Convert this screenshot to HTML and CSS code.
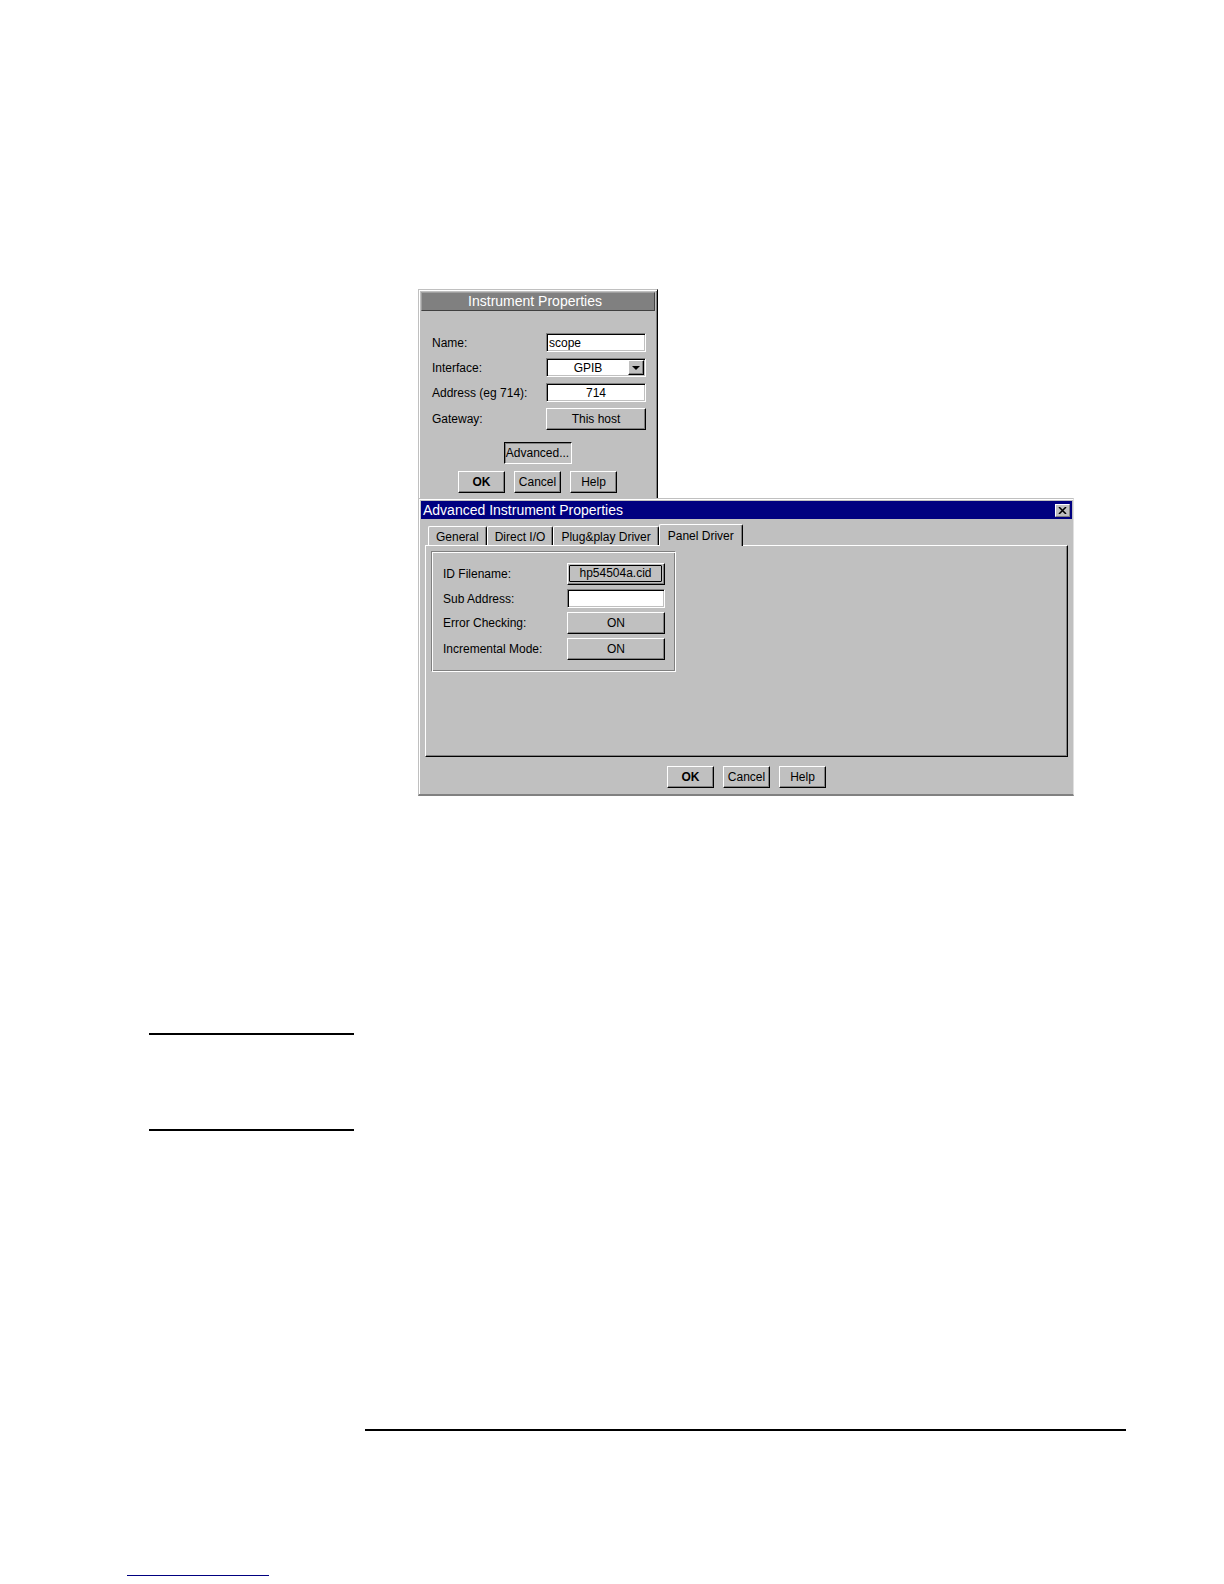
FILE: index.html
```
<!DOCTYPE html>
<html lang="en">
    <head>
        <meta charset="UTF-8" />
        <meta name="viewport" content="width=device-width, initial-scale=1.0" />
        <title>Advanced Instrument Properties</title>
        <link rel="stylesheet" href="styles.css">
    </head>
    <body>
        <main class="figure">
            <form class="dialog instrument">
                <h1 class="caption">Instrument Properties</h1>
                <div class="fields">
                    <label for="name">Name:</label>
                    <input id="name" type="text" value="scope" />

                    <label for="interface">Interface:</label>
                    <div class="dropdown">
                        <select id="interface">
                            <option>GPIB</option>
                        </select>
                        <span class="arrow">
                            <svg width="8" height="4" viewBox="0 0 8 4">
                                <path d="M0 0h8L4 4z" />
                            </svg>
                        </span>
                    </div>

                    <label for="address">Address (eg 714):</label>
                    <input id="address" class="centered" type="text" value="714" />

                    <label for="gateway">Gateway:</label>
                    <button id="gateway" type="button">This host</button>
                </div>
                <button class="advanced-button" type="button">Advanced...</button>
                <div class="actions">
                    <button class="default" type="button">OK</button>
                    <button type="button">Cancel</button>
                    <button type="button">Help</button>
                </div>
            </form>

            <form class="dialog advanced">
                <div class="titlebar">
                    <h2>Advanced Instrument Properties</h2>
                    <button class="close" type="button" aria-label="Close">
                        <svg width="9" height="7" viewBox="0 0 9 7">
                            <path d="M1 0l7 7M8 0L1 7" />
                        </svg>
                    </button>
                </div>
                <div class="tabs" role="tablist">
                    <button class="tab" type="button" role="tab">General</button>
                    <button class="tab" type="button" role="tab">Direct I/O</button>
                    <button class="tab" type="button" role="tab">Plug&amp;play Driver</button>
                    <button class="tab selected" type="button" role="tab" aria-selected="true">Panel Driver</button>
                </div>
                <div class="panel" role="tabpanel">
                    <div class="group">
                        <label for="idFilename">ID Filename:</label>
                        <button id="idFilename" class="focused" type="button">
                            <span>hp54504a.cid</span>
                        </button>

                        <label for="subAddress">Sub Address:</label>
                        <input id="subAddress" type="text" />

                        <label for="errorChecking">Error Checking:</label>
                        <button id="errorChecking" type="button">ON</button>

                        <label for="incrementalMode">Incremental Mode:</label>
                        <button id="incrementalMode" type="button">ON</button>
                    </div>
                </div>
                <div class="actions">
                    <button class="default" type="button">OK</button>
                    <button type="button">Cancel</button>
                    <button type="button">Help</button>
                </div>
            </form>
        </main>

        <aside class="note"></aside>
        <footer>
            <hr />
            <a class="footer-link" href="#" aria-label="Footer link"></a>
        </footer>
    </body>
</html>
```
FILE: styles.css
```
* {
    box-sizing: border-box;
}
body {
    margin: 0;
    background: white;
    color: black;
    font-family: "Liberation Sans", Arial, sans-serif;
    font-size: 12px;
}
h1,
h2 {
    margin: 0;
    font-weight: normal;
    color: white;
}
button,
input,
select {
    margin: 0;
    padding: 0;
    font: inherit;
    color: black;
    border-radius: 0;
}

/* Raised and sunken controls */
button {
    height: 22px;
    background: #c0c0c0;
    border: 1px solid;
    border-color: white black black white;
    box-shadow: inset -1px -1px #808080;
}
input,
select {
    width: 100%;
    height: 19px;
    background: white;
    border: 1px solid;
    border-color: #808080 white white #808080;
    box-shadow: inset 1px 1px black, inset -1px -1px #c0c0c0;
}
input {
    padding-left: 2px;
}
.centered {
    padding-left: 0;
    text-align: center;
}

.figure {
    margin: 289px 150px 0 418px;
}
.dialog {
    background: #c0c0c0;
}

/* Instrument Properties */
.instrument {
    display: flex;
    flex-direction: column;
    width: 240px;
    padding: 2px 2px 5px 1px;
    border: 1px solid #c0c0c0;
    border-right-color: black;
    border-bottom: none;
    box-shadow: inset 1px 1px white, inset -1px 0 #808080;
}
.caption {
    height: 19px;
    background: #808080;
    border: 1px solid;
    border-color: #a0a0a0 #404040 #404040 #a0a0a0;
    margin-left: 1px;
    padding-right: 6px;
    font-size: 14px;
    line-height: 17px;
    text-align: center;
}
.fields {
    display: grid;
    grid-template-columns: 114px 1fr;
    row-gap: 6px;
    align-items: center;
    padding: 22px 9px 12px 12px;
}
.dropdown {
    position: relative;
}
select {
    display: block;
    appearance: none;
    padding-right: 16px;
    text-align: center;
    text-align-last: center;
}
/* Sits over the right end of the select */
.arrow {
    position: absolute;
    top: 2px;
    right: 2px;
    bottom: 2px;
    display: flex;
    align-items: center;
    justify-content: center;
    width: 16px;
    background: #c0c0c0;
    border: 1px solid;
    border-color: white black black white;
    box-shadow: inset -1px -1px #808080;
    pointer-events: none;
}
.advanced-button {
    align-self: center;
    width: 68px;
    border-color: black white white black;
    box-shadow: inset 1px 1px #808080;
}
.actions {
    display: flex;
    justify-content: center;
    gap: 9px;
}
.actions button {
    width: 47px;
}
.instrument .actions {
    margin-top: 7px;
}
.default {
    font-weight: bold;
}

/* Advanced Instrument Properties */
.advanced {
    padding: 2px 1px 6px 2px;
    border: 1px solid #c0c0c0;
    border-right-color: #e0e0e0;
    border-bottom: 2px solid #808080;
    box-shadow: inset 1px 1px white;
}
.titlebar {
    display: flex;
    align-items: center;
    justify-content: space-between;
    height: 18px;
    padding: 0 2px;
    background: #000080;
}
.titlebar h2 {
    font-size: 14px;
    line-height: 18px;
}
.close {
    display: flex;
    align-items: center;
    justify-content: center;
    width: 15px;
    height: 13px;
    border-color: white #808080 #808080 white;
    box-shadow: none;
}
.close path {
    fill: none;
    stroke: black;
    stroke-width: 1.5;
}
.tabs {
    display: flex;
    align-items: flex-end;
    height: 26px;
    padding: 0 7px;
}
.tab {
    height: 19px;
    padding: 2px 7px 0;
    border-bottom: none;
    border-top-left-radius: 2px;
    border-top-right-radius: 2px;
    box-shadow: inset -1px 0 #808080;
}
/* The selected tab covers the top edge of the panel */
.tab.selected {
    position: relative;
    height: 22px;
    padding: 0 8px;
    margin-bottom: -1px;
}
.panel {
    height: 212px;
    margin: 0 4px 9px;
    padding: 5px;
    border: 1px solid;
    border-color: white black black white;
    box-shadow: inset -1px -1px #808080;
}
.group {
    display: grid;
    grid-template-columns: 124px 98px;
    row-gap: 4px;
    align-items: center;
    width: 245px;
    padding: 11px;
    border: 1px solid;
    border-color: #808080 white white #808080;
    box-shadow: inset 1px 1px white, inset -1px -1px #808080;
}
.focused {
    padding: 1px 2px 2px 1px;
}
.focused span {
    display: block;
    height: 17px;
    line-height: 15px;
    border: 1px solid black;
    border-radius: 1px;
}

/* Page rules */
.note {
    width: 205px;
    height: 98px;
    margin: 237px 0 298px 149px;
    border: solid black;
    border-width: 2px 0;
}
hr {
    height: 2px;
    margin: 0 98px 143px 365px;
    border: none;
    background: black;
}
.footer-link {
    display: block;
    width: 142px;
    height: 2px;
    margin: 0 0 8px 127px;
    border-bottom: 1px solid #000080;
}
```
